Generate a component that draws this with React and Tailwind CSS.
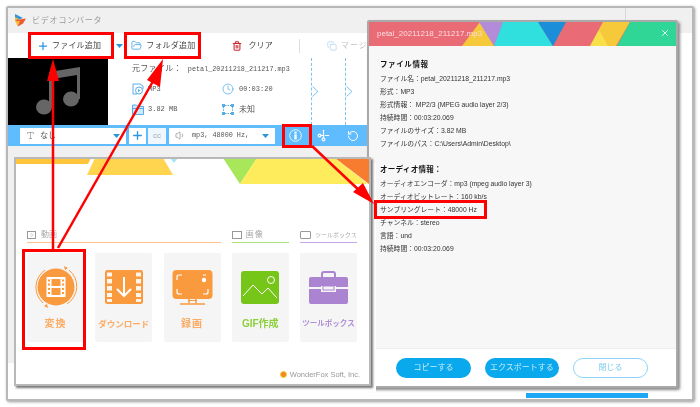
import { Plus, Trash2, Clock, Scissors, RotateCcw, Volume1, X, Copy, FolderOpen, Type, Play } from 'lucide-react';

const Caret = ({ className = '' }) => (
    <svg width="7" height="4" viewBox="0 0 7 4" className={className}>
        <path d="M0 0h7L3.500 4z" fill="#2b95dc" />
    </svg>
);

const Chevron = () => (
    <svg width="7" height="11" viewBox="0 0 7 11" className="shrink-0">
        <path d="M0.500 0.500L6 5.500L0.500 10.500" fill="none" stroke="#7cc3f2" strokeWidth="1" />
    </svg>
);

const MediaIcon = () => (
    <svg width="12" height="12" viewBox="0 0 12 12" className="shrink-0">
        <path d="M1 1h7l3 2v3M1 1v10h4" fill="none" stroke="#55aee8" strokeWidth="1" />
        <circle cx="7" cy="7.500" r="3.500" fill="#fff" stroke="#55aee8" strokeWidth="1" />
        <path d="M6 5.800l2.500 1.700L6 9.200z" fill="#55aee8" />
    </svg>
);

const SizeIcon = () => (
    <svg width="12" height="11" viewBox="0 0 12 11" className="shrink-0">
        <path d="M0.500 1h4l1.500 1.500h5.500v8H0.500z" fill="#cfe8fa" stroke="#55aee8" strokeWidth="1" />
        <path d="M1 4.500h10" stroke="#55aee8" strokeWidth="1" />
    </svg>
);

const ResolutionIcon = () => (
    <svg width="12" height="11" viewBox="0 0 12 11" className="shrink-0">
        <path d="M3 1.500h6M3 9.500h6M1.500 3v5M10.500 3v5" stroke="#55aee8" strokeWidth="1" strokeDasharray="1.500 1" />
        <path d="M0 0h3v3H0zM9 0h3v3H9zM0 8h3v3H0zM9 8h3v3H9z" fill="#55aee8" />
    </svg>
);

const InfoGlyph = () => (
    <svg width="13" height="13" viewBox="0 0 13 13" className="shrink-0">
        <circle cx="6.500" cy="6.500" r="5.800" fill="none" stroke="#e6f5ff" strokeWidth="1" />
        <rect x="5.300" y="2.600" width="2.400" height="2" fill="#fff" />
        <rect x="5.300" y="5.400" width="2.400" height="5" fill="#fff" />
    </svg>
);

const AppLogo = () => (
    <svg width="13" height="13" viewBox="0 0 13 13" className="ml-[6px] shrink-0">
        <path d="M1 0l8 4-8 3z" fill="#2f95dc" />
        <path d="M1 3l4 2-4 2z" fill="#f5b83d" />
        <path d="M2 6l10-1.500-3 5-5 3z" fill="#ef5a2c" />
        <path d="M1 7l5 0-2 5z" fill="#f5b83d" />
    </svg>
);

const ConvertIcon = () => (
    <svg width="44" height="44" viewBox="0 0 44 44">
        <path d="M11 5A21 21 0 0 0 9 38M33 39A21 21 0 0 0 35 5" fill="none" stroke="#f99a3f" strokeWidth="1" />
        <path d="M30 1l4 2-3 2zM14 43l-4-2 3-2z" fill="#f99a3f" />
        <circle cx="22" cy="22" r="18.500" fill="#f99a3f" />
        <rect x="12.500" y="12" width="19" height="20" fill="#fff" />
        <rect x="17.500" y="14" width="9" height="7" fill="#f99a3f" />
        <rect x="17.500" y="23" width="9" height="7" fill="#f99a3f" />
        <path d="M14 14.500h2v2h-2zM14 18.500h2v2h-2zM14 23h2v2h-2zM14 27h2v2h-2zM28 14.500h2v2h-2zM28 18.500h2v2h-2zM28 23h2v2h-2zM28 27h2v2h-2z" fill="#f99a3f" />
    </svg>
);

const DownloadIcon = () => (
    <svg width="38" height="34" viewBox="0 0 38 34">
        <rect width="38" height="34" rx="2.500" fill="#f99a3f" />
        <path d="M2 2.500h5v4H2zM2 9h5v4.500H2zM2 16h5v4.500H2zM2 23h5v4H2zM2 29h5v3H2zM31 2.500h5v4h-5zM31 9h5v4.500h-5zM31 16h5v4.500h-5zM31 23h5v4h-5zM31 29h5v3h-5z" fill="#fff" opacity="0.9" />
        <path d="M19 7v19M12 19l7 7 7-7" fill="none" stroke="#fff" strokeWidth="2" />
    </svg>
);

const RecordIcon = () => (
    <svg width="41" height="35" viewBox="0 0 41 35">
        <rect x="0.500" width="40" height="29" rx="4" fill="#f99a3f" />
        <path d="M5 10V7q0-2 2-2h3M5 19v3q0 2 2 2h3M31 24h3q2 0 2-2v-3M31 5h3" fill="none" stroke="#fff" strokeWidth="1.200" />
        <circle cx="32" cy="10" r="2.200" fill="#fff" />
        <path d="M17 29v4M24 29v4" stroke="#f99a3f" strokeWidth="1.500" />
        <path d="M16 30.500h9" stroke="#f99a3f" strokeWidth="1" />
        <path d="M8 34h25" stroke="#f99a3f" strokeWidth="1.500" />
    </svg>
);

const GifIcon = () => (
    <svg width="38" height="33" viewBox="0 0 38 33">
        <rect width="38" height="33" rx="3" fill="#76c61a" />
        <path d="M2 25l10-11 9 9 6-6 9 10" fill="none" stroke="#fff" strokeWidth="1" />
        <circle cx="30" cy="9" r="3.500" fill="none" stroke="#fff" strokeWidth="1" />
    </svg>
);

const ToolboxIcon = () => (
    <svg width="39" height="33" viewBox="0 0 39 33">
        <path d="M13 6V3q0-2 2-2h9q2 0 2 2v3" fill="none" stroke="#ab84d1" strokeWidth="2" />
        <path d="M0 8q0-2 2-2h35q2 0 2 2v8H27v-1H12v1H0z" fill="#ab84d1" />
        <path d="M0 18h12v3h15v-3h12v13q0 2-2 2H2q-2 0-2-2z" fill="#ab84d1" />
        <rect x="14" y="15" width="11" height="4" fill="none" stroke="#ab84d1" strokeWidth="1" />
    </svg>
);

const cards = [
    { label: '変換', icon: <ConvertIcon />, text: 'text-[10px] text-[#fbab63] tracking-[1px]' },
    { label: 'ダウンロード', icon: <DownloadIcon />, text: 'text-[8.500px] text-[#fbab63]' },
    { label: '録画', icon: <RecordIcon />, text: 'text-[10px] text-[#fbab63] tracking-[1px]' },
    { label: 'GIF作成', icon: <GifIcon />, text: 'text-[10px] text-[#8bd03a]' },
    { label: 'ツールボックス', icon: <ToolboxIcon />, text: 'text-[7.500px] text-[#b18ed6]' },
];

const fileInfo = [
    ['ファイル名：', 'petal_20211218_211217.mp3'],
    ['形式：', 'MP3'],
    ['形式情報：', ' MP2/3 (MPEG audio layer 2/3)'],
    ['持続時間：', '00:03:20.069'],
    ['ファイルのサイズ：', '3.82 MB'],
    ['ファイルのパス：', 'C:\\Users\\Admin\\Desktop\\'],
];

const audioInfo = [
    ['オーディオエンコーダ：', 'mp3 (mpeg audio layer 3)'],
    ['オーディオビットレート：', '160 kb/s'],
    ['サンプリングレート：', '48000 Hz'],
    ['チャンネル：', 'stereo'],
    ['言語：', 'und'],
    ['持続時間：', '00:03:20.069'],
];

const InfoRow = ({ label, value }) => (
    <div className="h-[13px] leading-[13px] whitespace-pre text-[#333] text-[6.800px]">
        <span>{label}</span>
        <span>{value}</span>
    </div>
);

export default function App() {
    return (
        <div className="relative w-[700px] h-[407px] overflow-hidden bg-white blur-[0.3px] font-['Liberation_Sans','Noto_Sans_CJK_JP',sans-serif]">
            {/* converter window */}
            <div className="absolute left-[6px] top-[6px] w-[688px] h-[395px] border-2 border-[#b8b8b8] rounded-[2px] bg-white shadow-[1px_1px_3px_#999] flex flex-col">
                <div className="h-[25px] shrink-0 bg-[#f0f0f0] flex items-center relative">
                    <AppLogo />
                    <span className="ml-[5px] text-[8px] tracking-[0.800px] text-[#999]">ビデオコンバータ</span>
                    <div className="absolute left-[617px] top-0 h-full w-px bg-[#d8d8d8]"></div>
                </div>

                <div className="h-[25px] shrink-0 flex items-center text-[8px] text-[#444]">
                    <Plus size={12} strokeWidth={2.500} className="text-[#2b95e0] ml-[29px]" />
                    <span className="ml-[3px] tracking-[0.200px]">ファイル追加</span>
                    <Caret className="ml-[15px]" />
                    <FolderOpen size={11} className="text-[#55aee8] ml-[8px]" />
                    <span className="ml-[4px] tracking-[0.200px]">フォルダ追加</span>
                    <Trash2 size={10} strokeWidth={2.500} className="text-[#c9252c] ml-[37px]" />
                    <span className="ml-[6px] tracking-[0.200px]">クリア</span>
                    <div className="ml-[26px] w-px h-[14px] bg-[#ddd]"></div>
                    <Copy size={10} className="text-[#b5d9f3] ml-[27px]" />
                    <span className="ml-[4px] text-[#c4c4c4] tracking-[1px]">マージ</span>
                </div>

                <div className="h-[67px] shrink-0 flex">
                    <div className="w-[100px] shrink-0 bg-black">
                        <svg width="100" height="67" viewBox="0 0 100 67">
                            <ellipse cx="36" cy="49" rx="8" ry="7.500" fill="#666" />
                            <ellipse cx="63" cy="41" rx="8" ry="7.500" fill="#666" />
                            <path d="M41 14l31-5v32h-3V17l-25 4v28h-3z" fill="#666" />
                        </svg>
                    </div>
                    <div className="w-[203px] shrink-0 pl-[24px] pt-[5px] text-[7px] text-[#555]">
                        <div className="h-[12px] flex items-center">
                            <span className="text-[8px] tracking-[0.300px]">元ファイル：</span>
                            <span className="ml-[6px] font-['Liberation_Mono'] text-[6.800px]">petal_20211218_211217.mp3</span>
                        </div>
                        <div className="mt-[8px] grid grid-cols-[90px_1fr] gap-y-[8px] font-['Liberation_Mono'] text-[7px]">
                            <div className="h-[12px] flex items-center gap-[4px]">
                                <MediaIcon />
                                MP3
                            </div>
                            <div className="h-[12px] flex items-center gap-[5px]">
                                <Clock size={12} strokeWidth={1.500} className="text-[#55aee8]" />
                                00:03:20
                            </div>
                            <div className="h-[12px] flex items-center gap-[4px]">
                                <SizeIcon />
                                3.82 MB
                            </div>
                            <div className="h-[12px] flex items-center gap-[5px]">
                                <ResolutionIcon />
                                <span className="font-['Noto_Sans_CJK_JP'] text-[8px]">未知</span>
                            </div>
                        </div>
                    </div>
                    <div className="w-[34px] shrink-0 border-l border-dashed border-[#7cc3f2] flex items-center">
                        <Chevron />
                    </div>
                    <div className="w-[34px] shrink-0 border-l border-dashed border-[#7cc3f2] flex items-center">
                        <Chevron />
                    </div>
                </div>

                <div className="w-[660px] h-[21px] shrink-0 bg-[#5fbdff] flex items-center pl-[12px]">
                    <div className="w-[106px] h-[16px] bg-white flex items-center px-[6px] text-[8px] text-[#555]">
                        <Type size={9} strokeWidth={1.500} className="text-[#777]" />
                        <span className="ml-[5px]">なし</span>
                        <Caret className="ml-auto" />
                    </div>
                    <div className="ml-[3px] w-[17px] h-[16px] bg-white flex items-center justify-center">
                        <Plus size={13} strokeWidth={2.500} className="text-[#2b95e0]" />
                    </div>
                    <div className="ml-[2px] w-[18px] h-[16px] bg-[#eef7fd] flex items-center justify-center text-[8px] text-[#aaa]">cc</div>
                    <div className="ml-[3px] w-[106px] h-[16px] bg-white flex items-center px-[6px] font-['Liberation_Mono'] text-[6.800px] text-[#555]">
                        <Volume1 size={11} strokeWidth={1.500} className="text-[#888]" />
                        <span className="ml-[6px] whitespace-pre">mp3, 48000 Hz,</span>
                        <Caret className="ml-auto" />
                    </div>
                    <div className="ml-[14px]">
                        <InfoGlyph />
                    </div>
                    <Scissors size={11} strokeWidth={2.500} className="ml-[16px] -rotate-45 text-white" />
                    <RotateCcw size={12} className="ml-[18px] text-white" />
                </div>

                <div className="w-[660px] h-[217px] shrink-0 bg-[#f0f0f0]"></div>
            </div>

            {/* progress strip under the info dialog */}
            <div className="absolute left-[526px] top-[393px] w-[122px] h-[5px] bg-[#1ea7f5]"></div>

            {/* info dialog */}
            <div className="absolute left-[367px] top-[20px] w-[311px] h-[368px] border-2 border-[#a9a9a9] rounded-[2px] bg-[#f7f7f7] shadow-[2px_2px_3px_#888] flex flex-col">
                <div className="relative h-[24px] shrink-0 bg-[#e96b76]">
                    <svg width="307" height="24" viewBox="0 0 307 24" className="absolute left-0 top-0">
                        <path d="M93 24L111 0L125 24z" fill="#f5c93a" />
                        <path d="M110 0h24l-9 24z" fill="#b38cd9" />
                        <path d="M134 0h35l15 24H125z" fill="#2fe0de" />
                        <path d="M169 0h28l-13 24z" fill="#1a8ed8" />
                        <path d="M234 0h27l-14 24h-26z" fill="#f5c93a" />
                        <path d="M221 24l9-16 9 16z" fill="#f7e04a" />
                        <path d="M261 0h46v24h-59z" fill="#2fd695" />
                    </svg>
                    <span className="absolute left-[8px] top-[6px] text-[8px] leading-[11px] text-[#fbdde0]">petal_20211218_211217.mp3</span>
                    <X size={10} strokeWidth={2} className="absolute right-[6px] top-[6px] text-white" />
                </div>
                <div className="flex-1 pl-[11px] pt-[12px]">
                    <div className="h-[14px] leading-[14px] text-[7.500px] font-bold text-[#111] tracking-[0.600px]">ファイル情報</div>
                    {fileInfo.map(([label, value]) => (
                        <InfoRow key={label} label={label} value={value} />
                    ))}
                    <div className="mt-[13px] h-[14px] leading-[14px] text-[7.500px] font-bold text-[#111] tracking-[0.300px]">オーディオ情報：</div>
                    {audioInfo.map(([label, value]) => (
                        <InfoRow key={label} label={label} value={value} />
                    ))}
                </div>
                <div className="h-[38px] shrink-0 bg-white border-t border-[#eee] flex items-center pl-[27px] gap-[14px] text-[8px]">
                    <div className="w-[75px] h-[20px] rounded-full bg-[#0aa8ec] flex items-center justify-center text-[#c6ecfb]">コピーする</div>
                    <div className="w-[74px] h-[20px] rounded-full bg-[#0aa8ec] flex items-center justify-center text-[#c6ecfb]">エクスポートする</div>
                    <div className="w-[75px] h-[20px] rounded-full border border-[#8ed4f5] bg-white flex items-center justify-center text-[#7ccbf0]">閉じる</div>
                </div>
            </div>

            {/* home window */}
            <div className="absolute left-[14px] top-[157px] w-[357px] h-[229px] border-2 border-[#b8b8b8] bg-white shadow-[2px_2px_2px_#777,5px_6px_0_#fff] flex flex-col">
                <svg width="353" height="26" viewBox="0 0 353 26" className="shrink-0">
                    <path d="M-1 -1H75L72 5H-1z" fill="#ffc63b" />
                    <path d="M79 -1H147L157 16H71z" fill="#ffd54f" />
                    <path d="M154 -1h8l-4 5z" fill="#a8e6f5" />
                    <path d="M207 -1h34l-17 26z" fill="#a8e65a" />
                    <path d="M241 -1h78l33 26H224z" fill="#ffec5c" />
                    <path d="M319 -1h34v26z" fill="#f87c2f" />
                </svg>
                <div className="pl-[11px] pt-[43px] w-[341px] grid grid-cols-5 gap-x-[11.250px] text-[#aaa]">
                    <div className="col-span-3 h-[15px] border-b border-[#ffc08a] flex items-center gap-[5px] text-[8px]">
                        <div className="w-[9px] h-[8px] border border-[#999] flex items-center justify-center">
                            <Play size={4} className="text-[#999]" />
                        </div>
                        動画
                    </div>
                    <div className="h-[15px] border-b border-[#a9e07a] flex items-center gap-[4px] text-[8px] tracking-[1px]">
                        <div className="w-[10px] h-[8px] border border-[#999]"></div>
                        画像
                    </div>
                    <div className="h-[15px] border-b border-[#c8a8e8] flex items-center gap-[4px] text-[6px] whitespace-nowrap">
                        <div className="w-[11px] h-[8px] shrink-0 border border-[#999] rounded-[1px]"></div>
                        ツールボックス
                    </div>
                    {cards.map((card) => (
                        <div key={card.label} className="mt-[10px] h-[89px] rounded-[2px] bg-[#f5f5f5] flex flex-col items-center">
                            <div className="h-[60px] mt-[4px] flex items-center justify-center">{card.icon}</div>
                            <span className={`mt-[1px] leading-[12px] font-bold whitespace-nowrap ${card.text}`}>{card.label}</span>
                        </div>
                    ))}
                </div>
                <div className="mt-auto mb-[4px] mr-[9px] flex items-center justify-end gap-[3px] text-[7.500px] text-[#999]">
                    <div className="w-[7px] h-[7px] rounded-full bg-[#f08a1d] border border-[#f5c93a]"></div>
                    WonderFox Soft, Inc.
                </div>
            </div>

            {/* red callouts */}
            <div className="absolute left-[28px] top-[32px] w-[86px] h-[27px] border-[3px] border-[#f00]"></div>
            <div className="absolute left-[124px] top-[32px] w-[77px] h-[27px] border-[3px] border-[#f00]"></div>
            <div className="absolute left-[282px] top-[124px] w-[30px] h-[24px] border-[3px] border-[#f00]"></div>
            <div className="absolute left-[22px] top-[249px] w-[64px] h-[101px] border-[3px] border-[#f00]"></div>
            <div className="absolute left-[374px] top-[200px] w-[113px] h-[19px] border-[3px] border-[#f00]"></div>
            <svg width="700" height="407" viewBox="0 0 700 407" className="absolute left-0 top-0 pointer-events-none">
                <path d="M53 249V78" stroke="#f00" strokeWidth="2.500" fill="none" />
                <path d="M53 59L47 81h12z" fill="#f00" />
                <path d="M58 248L156 76" stroke="#f00" strokeWidth="2.500" fill="none" />
                <path d="M163 59L147 80l13 7z" fill="#f00" />
                <path d="M312 146L362 193" stroke="#f00" strokeWidth="2.500" fill="none" />
                <path d="M374 204L353 192l10-9z" fill="#f00" />
            </svg>
        </div>
    );
}
